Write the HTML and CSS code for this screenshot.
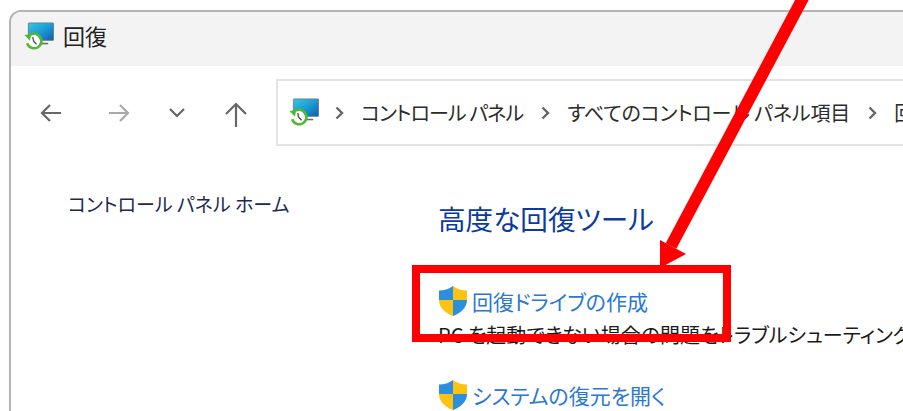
FILE: index.html
```html
<!DOCTYPE html>
<html lang="ja">
<head>
<meta charset="utf-8">
<title>回復</title>
<link rel="stylesheet" href="styles.css">
</head>
<body>
<svg class="defs" width="0" height="0" aria-hidden="true">
  <defs>
    <linearGradient id="screen" x1="0" y1="0" x2="1" y2="1">
      <stop offset="0" stop-color="#35c8e4"/>
      <stop offset="0.55" stop-color="#1a96d2"/>
      <stop offset="1" stop-color="#0b5fa8"/>
    </linearGradient>
    <symbol id="recovery" viewBox="0 0 32 30">
      <rect x="4.5" y="1" width="26" height="18" rx="0.5" fill="url(#screen)" stroke="#6f7f8c" stroke-width="1"/>
      <rect x="16" y="21.5" width="9" height="1.6" fill="#6b6b6b"/>
      <circle cx="9.5" cy="20" r="7" fill="#fff"/>
      <path d="M4 15.5 A7.6 7.6 0 1 1 3.2 22" fill="none" stroke="#4fb92f" stroke-width="2.6"/>
      <path d="M0.5 13.5 L7.5 12.5 L6 19.5 Z" fill="#4fb92f"/>
      <path d="M9 15.5 L10 20 L13 23" fill="none" stroke="#555" stroke-width="1.4"/>
    </symbol>
    <symbol id="shield" viewBox="0 0 30 32">
      <path d="M15 1 C11 4 6 5.500 1 5.500 L1 15 L15 15 Z" fill="#2b8fdc"/>
      <path d="M15 1 C19 4 24 5.500 29 5.500 L29 15 L15 15 Z" fill="#fcc313"/>
      <path d="M1 15 C1 23 8 28.500 15 31 L15 15 Z" fill="#fcc313"/>
      <path d="M29 15 C29 23 22 28.500 15 31 L15 15 Z" fill="#2b8fdc"/>
    </symbol>
    <symbol id="chevron" viewBox="0 0 9 14">
      <path d="M1.500 1.500 L7 7 L1.500 12.500" fill="none" stroke="#666" stroke-width="2.4"/>
    </symbol>
  </defs>
</svg>

<div class="window">
  <header class="titlebar">
    <svg class="icon-recovery"><use href="#recovery"/></svg>
    <span class="title">回復</span>
  </header>

  <nav class="navbar">
    <div class="nav-buttons">
      <svg class="nav-icon nav-back" viewBox="0 0 24 24"><path d="M22 12H3M11 4l-8 8 8 8"/></svg>
      <svg class="nav-icon nav-forward" viewBox="0 0 24 24"><path d="M2 12h19M13 4l8 8-8 8"/></svg>
      <svg class="nav-icon nav-down" viewBox="0 0 24 24"><path d="M5 8l7 7 7-7"/></svg>
      <svg class="nav-icon nav-up" viewBox="0 0 24 24"><path d="M12 26V3M2 13L12 3l10 10"/></svg>
    </div>
    <div class="address">
      <svg class="icon-recovery"><use href="#recovery"/></svg>
      <svg class="sep"><use href="#chevron"/></svg>
      <span class="crumb crumb-tight">コントロール パネル</span>
      <svg class="sep"><use href="#chevron"/></svg>
      <span class="crumb">すべてのコントロール パネル項目</span>
      <svg class="sep"><use href="#chevron"/></svg>
      <span class="crumb">回復</span>
    </div>
  </nav>

  <div class="content">
    <aside class="sidebar">コントロール パネル ホーム</aside>
    <main class="main">
      <h1 class="heading">高度な回復ツール</h1>
      <div class="tool">
        <div class="tool-link">
          <svg class="icon-shield"><use href="#shield"/></svg>
          <a class="link">回復ドライブの作成</a>
        </div>
        <p class="tool-desc">PC を起動できない場合の問題をトラブルシューティングします</p>
      </div>
      <div class="tool">
        <div class="tool-link">
          <svg class="icon-shield"><use href="#shield"/></svg>
          <a class="link">システムの復元を開く</a>
        </div>
      </div>
    </main>
  </div>
</div>

<svg class="annotation" viewBox="0 0 903 411">
  <line x1="804" y1="-4" x2="671" y2="246" stroke="#ff0000" stroke-width="12"/>
  <path d="M660 268 L660 240 L686 254 Z" fill="#ff0000"/>
</svg>
<div class="highlight"></div>
</body>
</html>
```
FILE: styles.css
```css
* { box-sizing: border-box; }

html, body {
  margin: 0;
  width: 903px;
  height: 411px;
  overflow: hidden;
  background: #fff;
}

body {
  position: relative;
  padding: 10px 0 0 9px;
  font-family: "Noto Sans CJK JP", "Noto Sans", sans-serif;
  font-feature-settings: "palt";
  color: #1a1a1a;
}

.defs { position: absolute; }

.window {
  height: 420px;
  width: 900px;
  border-top: 2px solid #b4b4b4;
  border-left: 2px solid #b4b4b4;
  border-top-left-radius: 12px;
  background: #fff;
  overflow: hidden;
}

.titlebar {
  height: 54px;
  background: #f3f3f3;
  display: flex;
  align-items: center;
  padding: 0 0 5px 13px;
  gap: 8px;
}

.title { font-size: 22px; line-height: 1; color: #222; margin-top: -3px; }

.icon-recovery { width: 31px; height: 29px; flex: none; }

.navbar {
  height: 80px;
  margin-top: 13px;
  display: flex;
  align-items: flex-start;
}

.nav-buttons {
  width: 265px;
  height: 67px;
  flex: none;
  display: flex;
  align-items: center;
  padding-left: 28px;
}

.nav-icon {
  width: 24px;
  height: 24px;
  fill: none;
  stroke: #666;
  stroke-width: 2.2;
  overflow: visible;
}

.nav-forward { margin-left: 44px; stroke: #a9a9a9; }
.nav-down { margin-left: 34px; }
.nav-up { margin-left: 35px; }

.address {
  flex: 1;
  height: 67px;
  border: 2px solid #e3e3e3;
  border-right: 0;
  display: flex;
  align-items: center;
  padding-left: 11px;
  white-space: nowrap;
  font-size: 20px;
  letter-spacing: -0.15px;
  color: #2b2b2b;
  overflow: hidden;
}

.crumb-tight { letter-spacing: -0.9px; }

.sep {
  width: 9px;
  height: 14px;
  flex: none;
  margin: 0 17px 0 18px;
}

.icon-recovery + .sep { margin: 0 17px 0 15px; }

.content {
  display: flex;
  margin-top: -6px;
}

.sidebar {
  width: 427px;
  flex: none;
  padding: 36px 0 0 57px;
  font-size: 19px;
  line-height: 30px;
  color: #1b2a55;
  white-space: nowrap;
}

.main { flex: 1; min-width: 0; }

.heading {
  margin: 44px 0 0;
  font-size: 27.600px;
  line-height: 42px;
  font-weight: 400;
  color: #0b3aa0;
  white-space: nowrap;
}

.tool-link {
  display: flex;
  align-items: center;
  gap: 4px;
  height: 40px;
  margin-top: 42px;
}

.tool + .tool .tool-link { margin-top: 26px; }

.icon-shield { width: 30px; height: 32px; flex: none; }

.link { font-size: 21px; line-height: 1; color: #2a78d2; white-space: nowrap; }

.tool-desc {
  margin: 0;
  font-size: 20px;
  line-height: 28px;
  color: #1a1a1a;
  white-space: nowrap;
}

.annotation {
  position: absolute;
  left: 0;
  top: 0;
  width: 903px;
  height: 411px;
}

.highlight {
  position: absolute;
  left: 412px;
  top: 265px;
  width: 319px;
  height: 77px;
  border: 8px solid #ff0000;
}
```
